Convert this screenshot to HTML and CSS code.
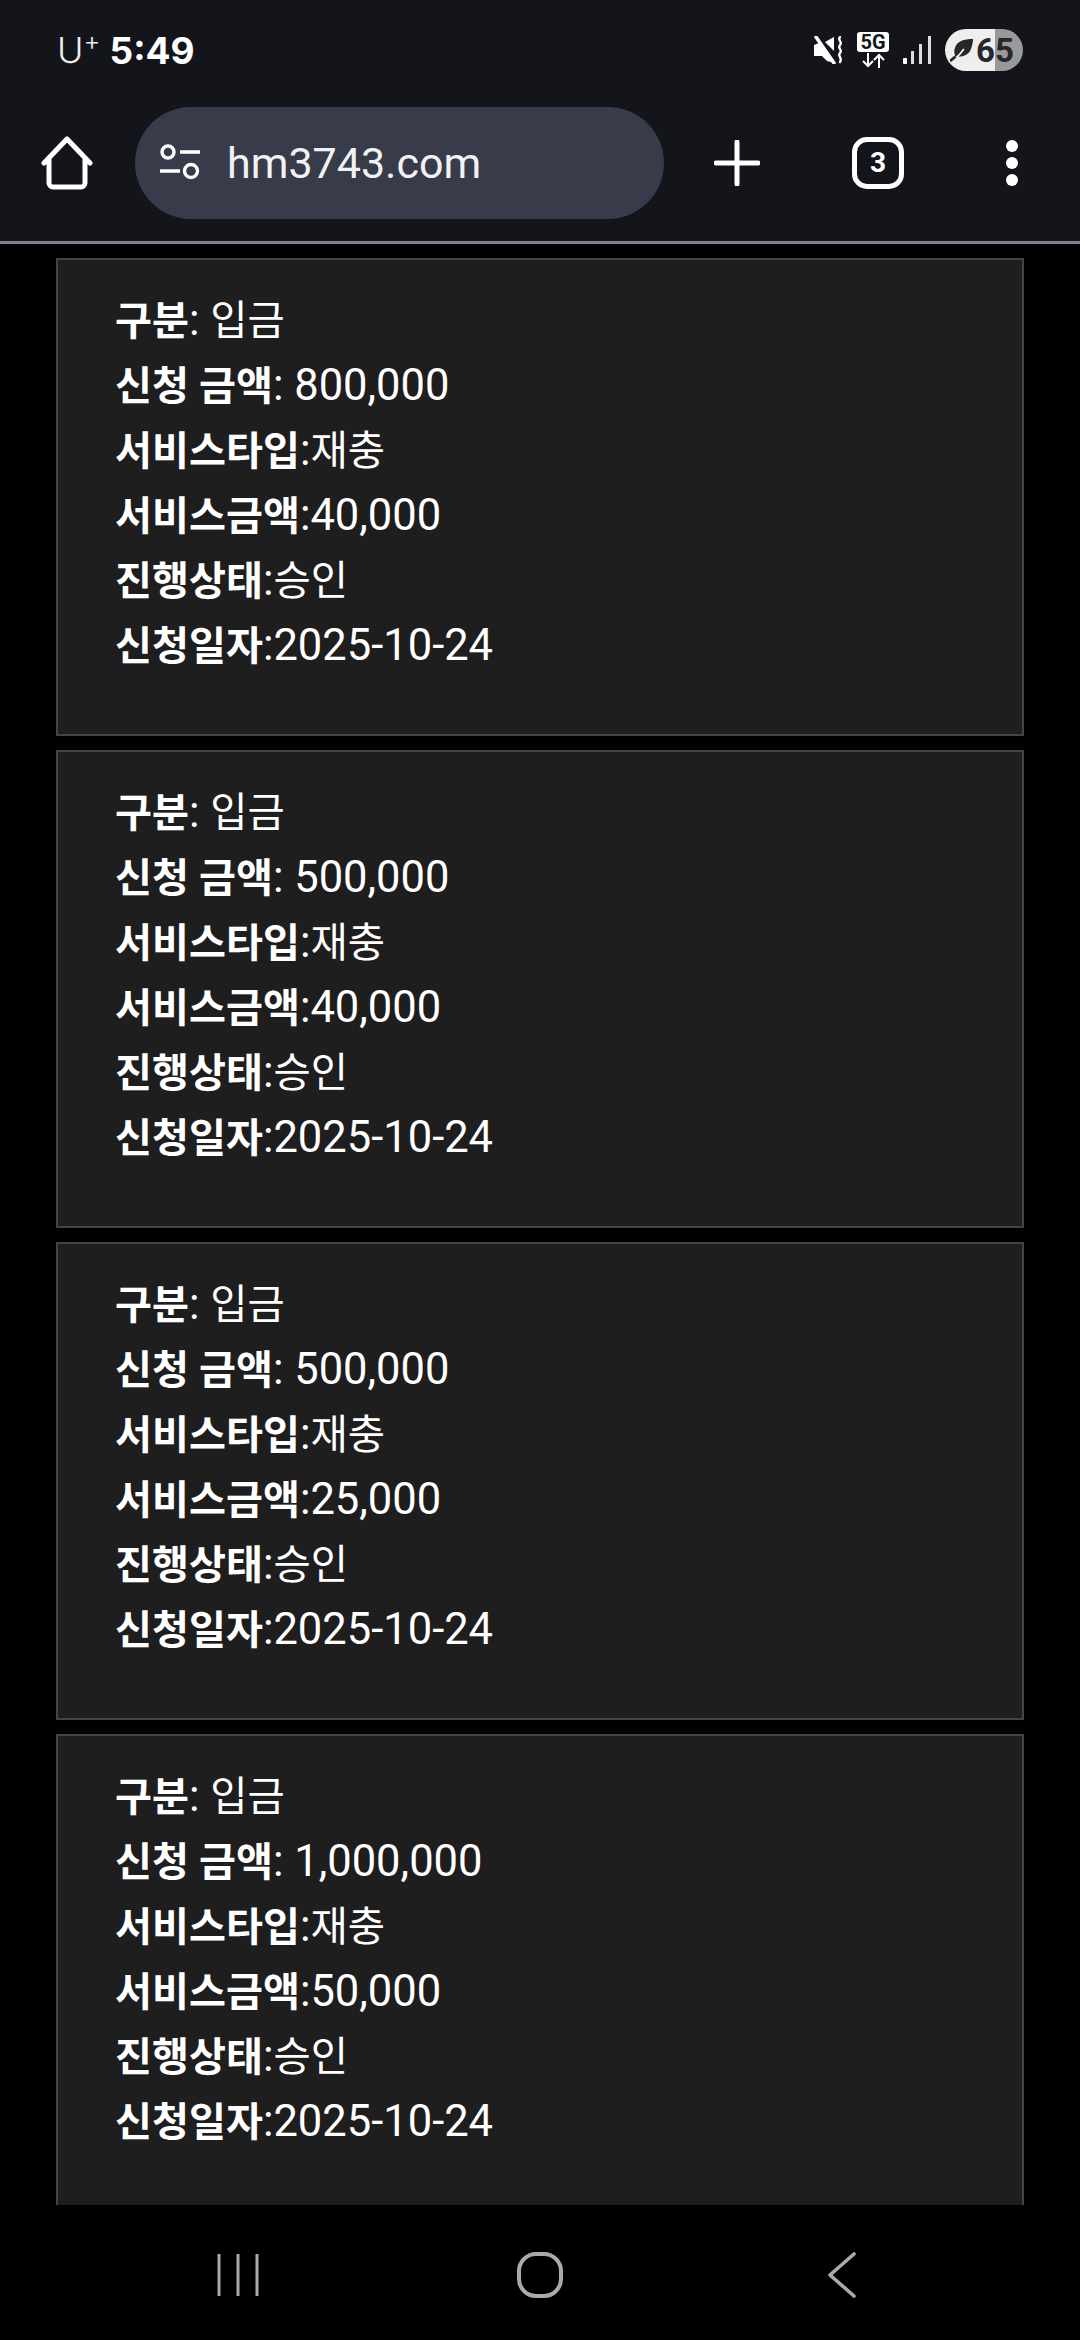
FILE: index.html
```html
<!DOCTYPE html>
<html lang="ko">
<head>
  <meta charset="UTF-8">
  <meta name="viewport" content="width=device-width, initial-scale=1.0">
  <title>hm3743.com</title>
  <link rel="stylesheet" href="styles.css">
</head>
<body>

  <div class="phone">
    <!-- Status bar -->
    <div class="status-bar">
      <div class="status-left">
        <span class="carrier">U<sup>+</sup></span>
        <span class="clock">5:49</span>
      </div>
      <div class="status-right">
        <svg class="icon-mute" width="30" height="28" viewBox="0 0 30 28">
          <path d="M1 9l5-2 15 18v2l-7-2-5-5H1z" fill="#fff"/>
          <path d="M12 6l9-5v14z" fill="#fff"/>
          <path d="M3 1l18 26" stroke="#fff" stroke-width="3.5" stroke-linecap="round"/>
          <path d="M27 1c-3 3 3 5 0 8s3 5 0 8 3 5 0 9" stroke="#fff" stroke-width="2.4" fill="none" stroke-linecap="round"/>
        </svg>
        <div class="net">
          <span class="net-label">5G</span>
          <svg width="26" height="15" viewBox="0 0 26 15">
            <path d="M8 0v13M3 8l5 5 5-5M19 15V2M14 7l5-5 5 5" stroke="#fff" stroke-width="2" fill="none"/>
          </svg>
        </div>
        <svg class="icon-signal" width="28" height="30" viewBox="0 0 28 30">
          <rect x="0" y="23" width="4" height="6" rx="1" fill="#fff"/>
          <rect x="8" y="16" width="3" height="13" fill="#ddd"/>
          <rect x="16" y="9" width="3" height="20" fill="#ddd"/>
          <rect x="25" y="1" width="3" height="28" fill="#ddd"/>
        </svg>
        <div class="battery">
          <svg class="icon-leaf" width="24" height="24" viewBox="0 0 26 26">
            <path d="M25 1C15 1 7 3 5 12c-1 3 0 6 1 8 8 1 15-2 17-9 1-3 2-7 2-10z" fill="#26272b"/>
            <path d="M1 25c4-1 9-6 14-13" stroke="#eee" stroke-width="2" fill="none"/>
            <path d="M0 25l6-5" stroke="#26272b" stroke-width="3"/>
          </svg>
          <span class="battery-num">65</span>
        </div>
      </div>
    </div>

    <!-- Browser toolbar -->
    <div class="toolbar">
      <svg class="icon-home" width="52" height="54" viewBox="0 0 52 54">
        <path d="M3 27L26 3l23 24M8 22v25a4 4 0 0 0 4 4h28a4 4 0 0 0 4-4V22" stroke="#fff" stroke-width="5" fill="none" stroke-linecap="round" stroke-linejoin="round"/>
      </svg>
      <div class="url-bar">
        <svg width="42" height="38" viewBox="0 0 42 38">
          <circle cx="9" cy="8" r="6" stroke="#fff" stroke-width="3.4" fill="none"/>
          <path d="M21 8h20M1 27h20" stroke="#fff" stroke-width="3.4"/>
          <circle cx="32" cy="27" r="6.5" stroke="#fff" stroke-width="3.4" fill="none"/>
        </svg>
        <span class="url-text">hm3743.com</span>
      </div>
      <svg class="icon-plus" width="46" height="46" viewBox="0 0 46 46">
        <path d="M23 2v42M2 23h42" stroke="#fff" stroke-width="5" stroke-linecap="round"/>
      </svg>
      <div class="tab-count">3</div>
      <div class="menu-dots">
        <span></span>
        <span></span>
        <span></span>
      </div>
    </div>

    <!-- List of requests -->
    <div class="content">
      <div class="card">
        <div><b>구분</b>: <span class="ko">입금</span></div>
        <div><b>신청 금액</b>: 800,000</div>
        <div><b>서비스타입</b>:<span class="ko">재충</span></div>
        <div><b>서비스금액</b>:40,000</div>
        <div><b>진행상태</b>:<span class="ko">승인</span></div>
        <div><b>신청일자</b>:2025-10-24</div>
      </div>
      <div class="card">
        <div><b>구분</b>: <span class="ko">입금</span></div>
        <div><b>신청 금액</b>: 500,000</div>
        <div><b>서비스타입</b>:<span class="ko">재충</span></div>
        <div><b>서비스금액</b>:40,000</div>
        <div><b>진행상태</b>:<span class="ko">승인</span></div>
        <div><b>신청일자</b>:2025-10-24</div>
      </div>
      <div class="card">
        <div><b>구분</b>: <span class="ko">입금</span></div>
        <div><b>신청 금액</b>: 500,000</div>
        <div><b>서비스타입</b>:<span class="ko">재충</span></div>
        <div><b>서비스금액</b>:25,000</div>
        <div><b>진행상태</b>:<span class="ko">승인</span></div>
        <div><b>신청일자</b>:2025-10-24</div>
      </div>
      <div class="card">
        <div><b>구분</b>: <span class="ko">입금</span></div>
        <div><b>신청 금액</b>: 1,000,000</div>
        <div><b>서비스타입</b>:<span class="ko">재충</span></div>
        <div><b>서비스금액</b>:50,000</div>
        <div><b>진행상태</b>:<span class="ko">승인</span></div>
        <div><b>신청일자</b>:2025-10-24</div>
      </div>
    </div>

    <!-- Android nav bar -->
    <div class="nav-bar">
      <svg width="46" height="46" viewBox="0 0 46 46">
        <path d="M4 2v42M23 2v42M42 2v42" stroke="#aaa" stroke-width="3"/>
      </svg>
      <svg width="46" height="46" viewBox="0 0 46 46">
        <rect x="2" y="2" width="42" height="42" rx="17" stroke="#aaa" stroke-width="4" fill="none"/>
      </svg>
      <svg width="46" height="46" viewBox="0 0 46 46">
        <path d="M35 2L11 23l24 21" stroke="#aaa" stroke-width="3.6" fill="none" stroke-linecap="round" stroke-linejoin="round"/>
      </svg>
    </div>
  </div>

</body>
</html>
```
FILE: styles.css
```css
body {
  margin: 0;
  padding: 0;
  background-color: #000;
  color: #fff;
  font-family: Roboto, "Noto Sans CJK KR", sans-serif;
}

.phone {
  width: 1080px;
  height: 2340px;
  display: flex;
  flex-direction: column;
  overflow: hidden;
}

/* Status bar */
.status-bar {
  height: 100px;
  flex-shrink: 0;
  box-sizing: border-box;
  padding: 0 57px;
  background-color: #13151b;
  display: flex;
  justify-content: space-between;
  align-items: center;
}

.status-left {
  display: flex;
  align-items: center;
  gap: 9px;
}

.carrier {
  font-family: Inter, sans-serif;
  font-size: 36px;
  font-weight: 300;
  color: #eee;
}

.carrier sup {
  font-size: 26px;
  line-height: 0;
}

.clock {
  font-family: Inter, sans-serif;
  font-size: 37px;
  font-weight: 700;
}

.status-right {
  display: flex;
  align-items: center;
  gap: 14px;
}

.net {
  display: flex;
  flex-direction: column;
  align-items: center;
  gap: 1px;
}

.net-label {
  width: 32px;
  height: 20px;
  border-radius: 3px;
  background-color: #fff;
  color: #13151b;
  font-size: 20px;
  font-weight: 700;
  line-height: 20px;
  text-align: center;
}

.battery {
  width: 78px;
  height: 42px;
  box-sizing: border-box;
  padding-left: 5px;
  border-radius: 21px;
  background: linear-gradient(to right, #eee 64%, #999 64%);
  display: flex;
  align-items: center;
  gap: 2px;
}

.battery-num {
  color: #26272b;
  font-size: 33px;
  font-weight: 700;
}

/* Toolbar */
.toolbar {
  height: 141px;
  flex-shrink: 0;
  box-sizing: border-box;
  padding: 7px 0 22px 41px;
  background-color: #13151b;
  display: flex;
  align-items: center;
}

.url-bar {
  width: 529px;
  height: 112px;
  box-sizing: border-box;
  margin-left: 42px;
  padding-left: 24px;
  border-radius: 56px;
  background-color: #383b49;
  display: flex;
  align-items: center;
  gap: 26px;
}

.url-text {
  font-size: 43px;
  color: #f2f2f5;
}

.icon-plus {
  margin-left: 50px;
}

.tab-count {
  width: 52px;
  height: 52px;
  box-sizing: border-box;
  margin-left: 92px;
  border: 5px solid #fff;
  border-radius: 15px;
  font-size: 28px;
  font-weight: 700;
  line-height: 42px;
  text-align: center;
}

.menu-dots {
  margin-left: 102px;
  display: flex;
  flex-direction: column;
  gap: 5px;
}

.menu-dots span {
  width: 12px;
  height: 12px;
  border-radius: 50%;
  background-color: #fff;
}

/* List */
.content {
  flex: 1;
  min-height: 0;
  overflow: hidden;
  border-top: 3px solid #7f7f8b;
  padding-top: 14px;
}

.card {
  margin: 0 56px 14px;
  padding: 28px 57px 56px;
  height: 478px;
  box-sizing: border-box;
  background-color: #1e1e1e;
  border: 2px solid #444;
  font-size: 43.5px;
  line-height: 65px;
}

.card b {
  font-size: 40.2px;
  font-weight: 700;
  line-height: 1;
}

.card .ko {
  font-size: 40.5px;
  line-height: 1;
}

/* Nav bar */
.nav-bar {
  height: 135px;
  flex-shrink: 0;
  box-sizing: border-box;
  padding-top: 5px;
  background-color: #000;
  display: flex;
  justify-content: center;
  align-items: center;
  gap: 256px;
}
```
